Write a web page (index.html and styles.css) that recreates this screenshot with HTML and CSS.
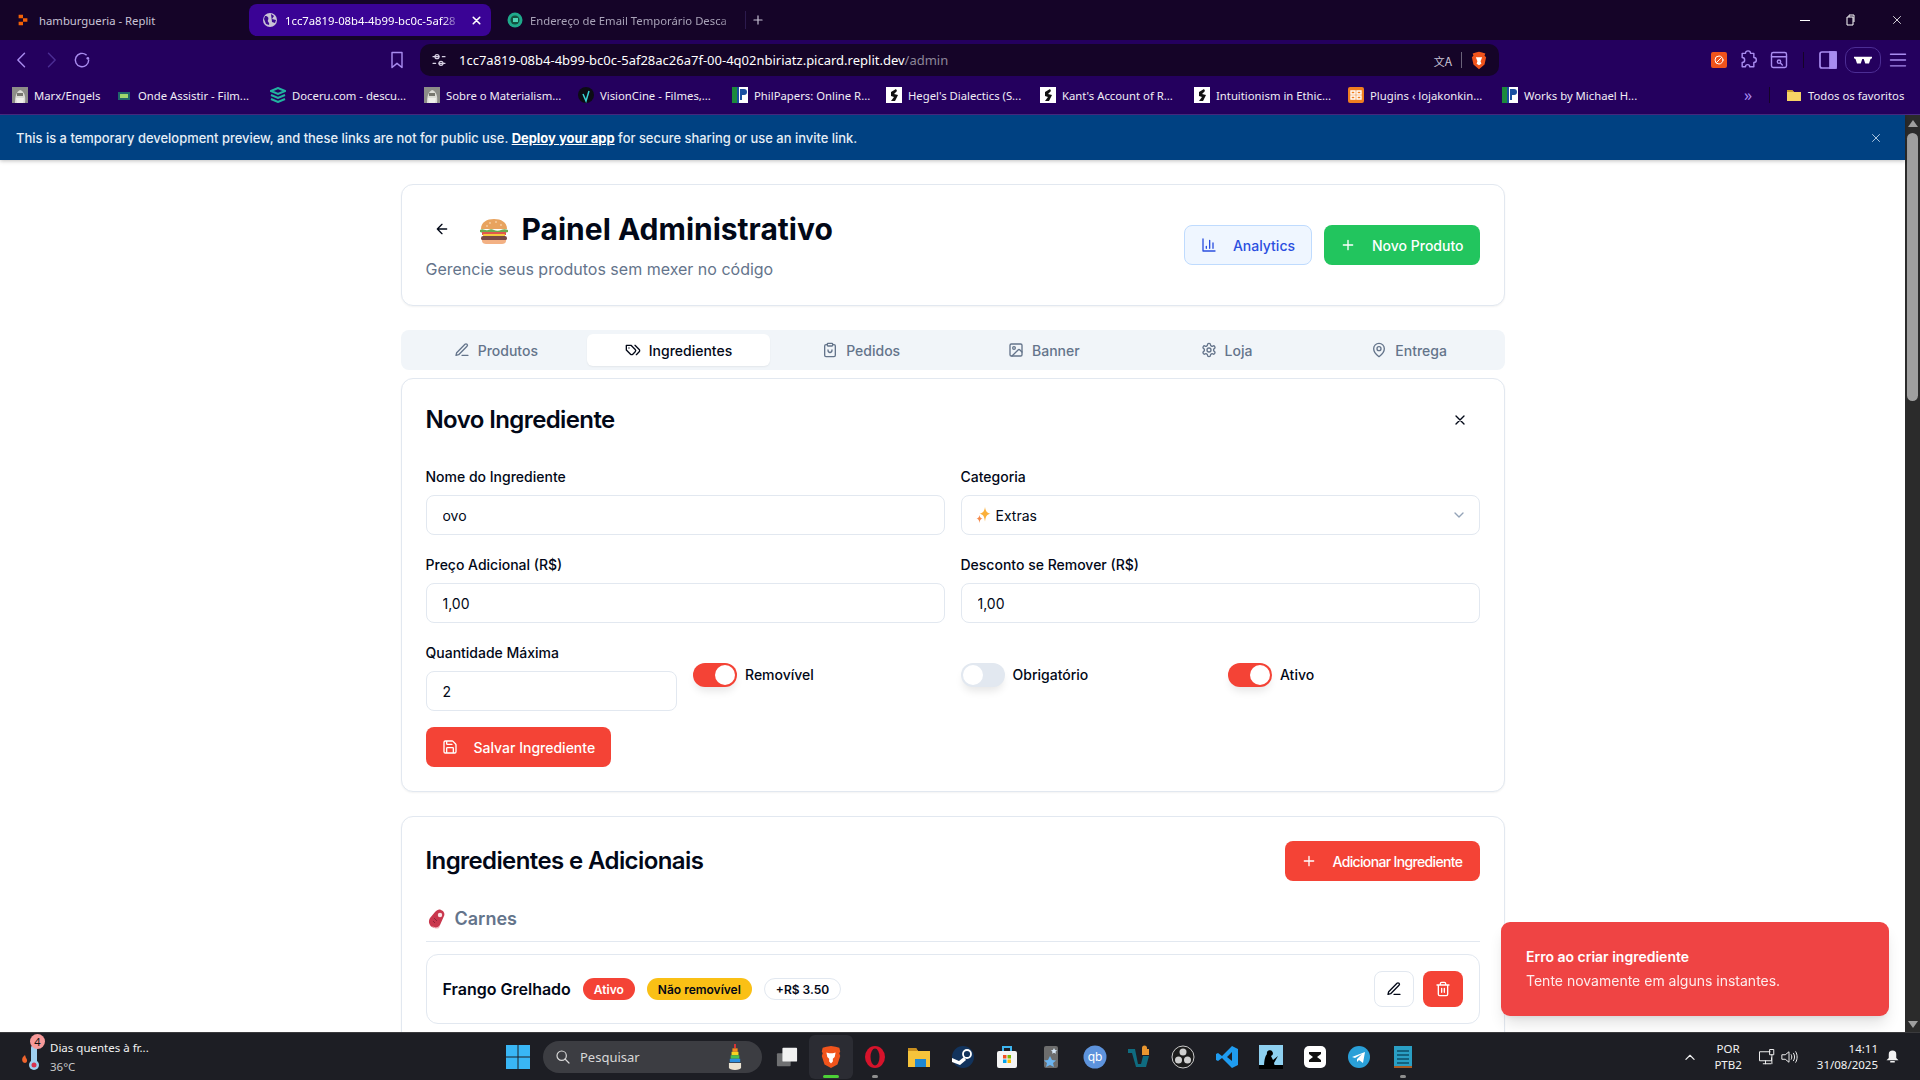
FILE: index.html
```html
<!DOCTYPE html>
<html lang="pt-BR">
<head>
<meta charset="utf-8">
<title>Painel Administrativo</title>
<link rel="stylesheet" href="styles.css">
</head>
<body>
<svg class="sprite" aria-hidden="true">
  <symbol id="i-left" viewBox="0 0 24 24"><path d="M12 19l-7-7 7-7M19 12H5"/></symbol>
  <symbol id="i-chart" viewBox="0 0 24 24"><path d="M3 3v18h18M18 17V9M13 17V5M8 17v-3"/></symbol>
  <symbol id="i-plus" viewBox="0 0 24 24"><path d="M5 12h14M12 5v14"/></symbol>
  <symbol id="i-pen" viewBox="0 0 24 24"><path d="M12 20h9M16.5 3.5a2.12 2.12 0 0 1 3 3L7 19l-4 1 1-4Z"/></symbol>
  <symbol id="i-tags" viewBox="0 0 24 24"><path d="M9 5H2v7l6.29 6.29c.94.94 2.48.94 3.42 0l3.58-3.58c.94-.94.94-2.48 0-3.42L9 5ZM6 9.01V9M15 5l6.3 6.3a2.4 2.4 0 0 1 0 3.4L17 19"/></symbol>
  <symbol id="i-order" viewBox="0 0 24 24"><path d="M8 4H6a2 2 0 0 0-2 2v14a2 2 0 0 0 2 2h12a2 2 0 0 0 2-2V6a2 2 0 0 0-2-2h-2M9 2h6a1 1 0 0 1 1 1v2a1 1 0 0 1-1 1H9a1 1 0 0 1-1-1V3a1 1 0 0 1 1-1ZM9 12c0 5 6 5 6 0"/></symbol>
  <symbol id="i-image" viewBox="0 0 24 24"><rect x="3" y="3" width="18" height="18" rx="2"/><circle cx="9" cy="9" r="2"/><path d="m21 15-3.086-3.086a2 2 0 0 0-2.828 0L6 21"/></symbol>
  <symbol id="i-gear" viewBox="0 0 24 24"><path d="M12.22 2h-.44a2 2 0 0 0-2 2v.18a2 2 0 0 1-1 1.73l-.43.25a2 2 0 0 1-2 0l-.15-.08a2 2 0 0 0-2.73.73l-.22.38a2 2 0 0 0 .73 2.73l.15.1a2 2 0 0 1 1 1.72v.51a2 2 0 0 1-1 1.74l-.15.09a2 2 0 0 0-.73 2.73l.22.38a2 2 0 0 0 2.73.73l.15-.08a2 2 0 0 1 2 0l.43.25a2 2 0 0 1 1 1.73V20a2 2 0 0 0 2 2h.44a2 2 0 0 0 2-2v-.18a2 2 0 0 1 1-1.73l.43-.25a2 2 0 0 1 2 0l.15.08a2 2 0 0 0 2.73-.73l.22-.39a2 2 0 0 0-.73-2.73l-.15-.08a2 2 0 0 1-1-1.74v-.5a2 2 0 0 1 1-1.74l.15-.09a2 2 0 0 0 .73-2.73l-.22-.38a2 2 0 0 0-2.73-.73l-.15.08a2 2 0 0 1-2 0l-.43-.25a2 2 0 0 1-1-1.73V4a2 2 0 0 0-2-2z"/><circle cx="12" cy="12" r="3"/></symbol>
  <symbol id="i-pin" viewBox="0 0 24 24"><path d="M20 10c0 6-8 12-8 12s-8-6-8-12a8 8 0 0 1 16 0Z"/><circle cx="12" cy="10" r="3"/></symbol>
  <symbol id="i-x" viewBox="0 0 24 24"><path d="M18 6 6 18M6 6l12 12"/></symbol>
  <symbol id="i-chev" viewBox="0 0 24 24"><path d="m6 9 6 6 6-6"/></symbol>
  <symbol id="i-save" viewBox="0 0 24 24"><path d="M15.2 3a2 2 0 0 1 1.4.6l3.8 3.8a2 2 0 0 1 .6 1.4V19a2 2 0 0 1-2 2H5a2 2 0 0 1-2-2V5a2 2 0 0 1 2-2zM17 21v-7a1 1 0 0 0-1-1H8a1 1 0 0 0-1 1v7M7 3v4a1 1 0 0 0 1 1h7"/></symbol>
  <symbol id="i-trash" viewBox="0 0 24 24"><path d="M3 6h18M19 6v14c0 1-1 2-2 2H7c-1 0-2-1-2-2V6M8 6V4c0-1 1-2 2-2h4c1 0 2 1 2 2v2M10 11v6M14 11v6"/></symbol>
  <symbol id="f-marx" viewBox="0 0 16 16"><rect width="16" height="16" fill="#8d8d88"/><path d="M3 16c0-6 1-11 5-13 4 1 6 6 5 13z" fill="#dcdcd6"/><path d="M5 6h6v3H5z" fill="#77776f"/><path d="M4 11h8l-1 5H5z" fill="#efefea"/></symbol>
  <symbol id="f-phil" viewBox="0 0 16 16"><rect width="16" height="16" fill="#fff"/><rect width="5" height="16" fill="#1c8a3c"/><rect x="5" width="2" height="16" fill="#1a4fa0"/><path d="M8 2h4a3 3 0 0 1 0 6h-2v5H8z" fill="#1a4fa0"/></symbol>
  <symbol id="f-hegel" viewBox="0 0 16 16"><rect width="16" height="16" fill="#fff"/><path d="M10 2 5 5v4l3 1-3 4h4l3-6-4-1 3-3z" fill="#111"/></symbol>
</svg>

<header class="tabstrip">
  <div class="tab tab-replit">
    <svg class="fav" viewBox="0 0 16 16"><path d="M3 2h5v4H3zM8 6h5v4H8zM3 10h5v4H3z" fill="#f26207"/></svg>
    <span class="tab-title">hamburgueria - Replit</span>
  </div>
  <div class="tab tab-active">
    <svg class="fav" viewBox="0 0 16 16"><circle cx="8" cy="8" r="7" fill="#c9c3d6"/><path d="M3 4c3 0 4 2 3 4s2 2 1 5l-3-1-2-5zM9 2l3 2-2 3 4 1-1 3-3-1z" fill="#3b0a8f"/></svg>
    <span class="tab-title tab-fade">1cc7a819-08b4-4b99-bc0c-5af28</span>
    <svg class="ic tab-x"><use href="#i-x"/></svg>
  </div>
  <div class="tab tab-mail">
    <svg class="fav" viewBox="0 0 16 16"><circle cx="8" cy="8" r="7.5" fill="#1fa98b"/><circle cx="8" cy="8" r="4.5" fill="#14503f"/><path d="M6 6h5v4H6z" fill="#4fd6b6"/></svg>
    <span class="tab-title tab-fade">Endereço de Email Temporário Desca</span>
  </div>
  <span class="tab-sep"></span>
  <svg class="ic tab-plus"><use href="#i-plus"/></svg>
  <div class="win-btns">
    <span class="win-min"></span>
    <svg class="win-max" viewBox="0 0 12 12"><path d="M3 3h6v8H3zM5 3V1h5v7"/></svg>
    <svg class="ic win-close"><use href="#i-x"/></svg>
  </div>
</header>

<div class="toolbar">
  <svg class="ic tb-ic tb-back" viewBox="0 0 24 24"><path d="M15 4l-8 8 8 8"/></svg>
  <svg class="ic tb-ic tb-fwd" viewBox="0 0 24 24"><path d="M9 4l8 8-8 8"/></svg>
  <svg class="ic tb-ic tb-reload" viewBox="0 0 24 24"><path d="M20 12a8 8 0 1 1-3-6.2"/><circle cx="19" cy="10" r="1.6" class="solid"/></svg>
  <svg class="ic tb-ic tb-mark" viewBox="0 0 24 24"><path d="M6 3h12v18l-6-5-6 5z"/></svg>
  <div class="urlbar">
    <svg class="ic url-tune" viewBox="0 0 24 24"><path d="M3 7h9M17 7h4M3 17h4M12 17h9"/><circle cx="9" cy="7" r="3"/><circle cx="15" cy="17" r="3"/></svg>
    <span class="url-text">1cc7a819-08b4-4b99-bc0c-5af28ac26a7f-00-4q02nbiriatz.picard.replit.dev<span class="url-dim">/admin</span></span>
    <span class="url-trans">文<b>A</b></span>
    <span class="url-sep"></span>
    <svg class="brave-sm" viewBox="0 0 20 24"><path d="M10 1l4 1 4 1-1 3 2 2-2 9-7 6-7-6-2-9 2-2-1-3 4-1z" fill="#f1541c"/><path d="M6 8h8l-2 5 1 3-3 2-3-2 1-3z" fill="#fff"/></svg>
  </div>
  <div class="tb-right">
    <span class="shield-box"><svg class="ic" viewBox="0 0 24 24"><circle cx="12" cy="12" r="8"/><path d="M7 17 17 7"/></svg></span>
    <svg class="ic tb-ic" viewBox="0 0 24 24"><path d="M9 4a3 3 0 0 1 6 0h4v5a3 3 0 0 1 0 6v5h-5a2.5 2.5 0 0 0-5 0H5v-5a3 3 0 0 0 0-6V4z"/></svg>
    <svg class="ic tb-ic" viewBox="0 0 24 24"><rect x="3" y="3" width="18" height="18" rx="2"/><path d="M3 8h18"/><circle cx="12" cy="14" r="2"/><path d="m14 16 2 2"/></svg>
    <span class="tb-sep"></span>
    <svg class="tb-side" viewBox="0 0 20 20"><rect x="2" y="2" width="16" height="16" rx="2"/><rect x="12" y="2" width="6" height="16" class="side-fill"/></svg>
    <span class="guest"><svg viewBox="0 0 24 12" class="shades"><path d="M0 1h24v2l-2 1-2 6h-5l-2-6h-2l-2 6H4L2 4 0 3z"/></svg></span>
    <svg class="ic tb-ic" viewBox="0 0 24 24"><path d="M3 5h18M3 12h18M3 19h18"/></svg>
  </div>
</div>

<nav class="bookmarks">
  <div class="bm bm-first"><svg class="fav"><use href="#f-marx"/></svg><span>Marx/Engels</span></div>
  <div class="bm"><svg class="fav" viewBox="0 0 16 16"><rect x="2" y="5" width="12" height="8" fill="#20656b"/><path d="M4 7h8v4H4z" fill="#9fd86d"/></svg><span>Onde Assistir - Film...</span></div>
  <div class="bm"><svg class="fav" viewBox="0 0 16 16"><path d="M1 4l7-3 7 3-7 3zM1 8l7 3 7-3M1 12l7 3 7-3" fill="none" stroke="#22b3a0" stroke-width="2"/></svg><span>Doceru.com - descu...</span></div>
  <div class="bm"><svg class="fav"><use href="#f-marx"/></svg><span>Sobre o Materialism...</span></div>
  <div class="bm"><svg class="fav" viewBox="0 0 16 16"><circle cx="8" cy="8" r="8" fill="#0c0c14"/><path d="M5 7l3 7 3-10" fill="none" stroke="#3ad6d6" stroke-width="1.5"/></svg><span>VisionCine - Filmes,...</span></div>
  <div class="bm"><svg class="fav"><use href="#f-phil"/></svg><span>PhilPapers: Online R...</span></div>
  <div class="bm"><svg class="fav"><use href="#f-hegel"/></svg><span>Hegel's Dialectics (S...</span></div>
  <div class="bm"><svg class="fav"><use href="#f-hegel"/></svg><span>Kant's Account of R...</span></div>
  <div class="bm"><svg class="fav"><use href="#f-hegel"/></svg><span>Intuitionism in Ethic...</span></div>
  <div class="bm"><svg class="fav" viewBox="0 0 16 16"><rect width="16" height="16" rx="2" fill="#f07f20"/><path d="M3 4h4v3H3zM9 4h4v3H9zM3 9h4v3H3zM9 9h4v3H9z" fill="none" stroke="#fff" stroke-width="1.4"/></svg><span>Plugins ‹ lojakonkin...</span></div>
  <div class="bm bm-last"><svg class="fav"><use href="#f-phil"/></svg><span>Works by Michael H...</span></div>
  <span class="bm-more">»</span>
  <span class="bm-sep"></span>
  <div class="bm bm-all"><svg class="fav" viewBox="0 0 16 16"><path d="M1 3h5l2 2h7v9H1z" fill="#f6d365"/><path d="M1 3h5l2 2H1z" fill="#c99a2e"/></svg><span>Todos os favoritos</span></div>
</nav>

<div class="view">
  <div class="content">
    <div class="banner">
      <p class="banner-text">This is a temporary development preview, and these links are not for public use. <a class="banner-link">Deploy your app</a> for secure sharing or use an invite link.</p>
      <svg class="ic banner-x"><use href="#i-x"/></svg>
    </div>
    <main class="page">
      <div class="wrap">
        <section class="card head-card">
          <div class="head-left">
            <div class="head-title">
              <span class="back"><svg class="ic ic16"><use href="#i-left"/></svg></span>
              <svg class="burger" viewBox="0 0 32 32">
                <path d="M3 14C3 7 9 4 16 4s13 3 13 10z" fill="#e8a35f"/>
                <circle cx="12" cy="8" r=".8" fill="#ffe9c8"/><circle cx="18" cy="7" r=".8" fill="#ffe9c8"/><circle cx="23" cy="10" r=".8" fill="#ffe9c8"/><circle cx="9" cy="11" r=".8" fill="#ffe9c8"/>
                <path d="M2 15c3-2 5 1 8 0s4-1 6 0 5 1 7 0 5-1 7 0v2c-3 1-5 1-7 1H9c-3 0-5 0-7-1z" fill="#6cab4e"/>
                <rect x="4" y="17" width="24" height="3" fill="#e0574c"/>
                <rect x="5" y="19" width="22" height="2.5" rx="1" fill="#f5c93d"/>
                <rect x="3" y="21" width="26" height="4.5" rx="2.2" fill="#7a4a45"/>
                <path d="M4 25h24v1c0 2-2 3-4 3H8c-2 0-4-1-4-3z" fill="#f3b184"/>
              </svg>
              <h1 class="h1">Painel Administrativo</h1>
            </div>
            <p class="sub">Gerencie seus produtos sem mexer no código</p>
          </div>
          <div class="head-actions">
            <button class="btn btn-analytics"><svg class="ic ic16"><use href="#i-chart"/></svg>Analytics</button>
            <button class="btn btn-green"><svg class="ic ic16"><use href="#i-plus"/></svg>Novo Produto</button>
          </div>
        </section>

        <div class="tabs">
          <div class="t"><svg class="ic ic16"><use href="#i-pen"/></svg>Produtos</div>
          <div class="t t-on"><svg class="ic ic16"><use href="#i-tags"/></svg>Ingredientes</div>
          <div class="t"><svg class="ic ic16"><use href="#i-order"/></svg>Pedidos</div>
          <div class="t"><svg class="ic ic16"><use href="#i-image"/></svg>Banner</div>
          <div class="t"><svg class="ic ic16"><use href="#i-gear"/></svg>Loja</div>
          <div class="t"><svg class="ic ic16"><use href="#i-pin"/></svg>Entrega</div>
        </div>

        <section class="card form-card">
          <div class="form-head">
            <h2 class="h2">Novo Ingrediente</h2>
            <span class="form-close"><svg class="ic ic16"><use href="#i-x"/></svg></span>
          </div>
          <div class="grid-2">
            <div class="field"><label class="lbl">Nome do Ingrediente</label><input class="inp" value="ovo"></div>
            <div class="field"><label class="lbl">Categoria</label>
              <div class="select">
                <svg class="sparkle" viewBox="0 0 16 16"><path d="M10 0c.7 4.500 2 6 5.500 6.700C12 7.400 10.700 9 10 14.500 9.300 9 8 7.400 4.500 6.700 8 6 9.300 4.500 10 0z" fill="#fbb03b"/><path d="M4.500 8c.4 2.200 1.200 3.100 3 3.600-1.800.5-2.600 1.400-3 4.400-.4-3-1.200-3.900-3-4.400 1.800-.5 2.600-1.400 3-3.600z" fill="#f58a4b"/></svg>
                <span>Extras</span>
                <svg class="ic ic16 sel-chev"><use href="#i-chev"/></svg>
              </div>
            </div>
            <div class="field"><label class="lbl">Preço Adicional (R$)</label><input class="inp" value="1,00"></div>
            <div class="field"><label class="lbl">Desconto se Remover (R$)</label><input class="inp" value="1,00"></div>
          </div>
          <div class="grid-4">
            <div class="field"><label class="lbl">Quantidade Máxima</label><input class="inp" value="2"></div>
            <div class="sw-row"><span class="sw sw-on"><i class="knob"></i></span><span class="lbl">Removível</span></div>
            <div class="sw-row"><span class="sw"><i class="knob"></i></span><span class="lbl">Obrigatório</span></div>
            <div class="sw-row"><span class="sw sw-on"><i class="knob"></i></span><span class="lbl">Ativo</span></div>
          </div>
          <button class="btn btn-red btn-save"><svg class="ic ic16"><use href="#i-save"/></svg>Salvar Ingrediente</button>
        </section>

        <section class="card list-card">
          <div class="list-head">
            <h2 class="h2">Ingredientes e Adicionais</h2>
            <button class="btn btn-red btn-add"><svg class="ic ic16"><use href="#i-plus"/></svg>Adicionar Ingrediente</button>
          </div>
          <h3 class="cat">
            <svg class="meat" viewBox="0 0 18 20"><path d="M13 1c3 1 4 4 3 6l-4 9c-1 3-5 4-8 2S0 12 2 9l5-6c2-2 4-3 6-2z" fill="#c9374d"/><path d="M4 17c3 2 6 2 8-1l-1 3c-2 1-5 1-7-2z" fill="#f4b6bf"/><circle cx="12" cy="6" r="2.200" fill="#fbe3e6"/><path d="M6 9l3 3M5 12l2 2" stroke="#8e2238" fill="none"/></svg>
            Carnes
          </h3>
          <div class="item">
            <div class="item-left">
              <span class="item-name">Frango Grelhado</span>
              <span class="badge b-red">Ativo</span>
              <span class="badge b-yellow">Não removível</span>
              <span class="badge b-white">+R$ 3.50</span>
            </div>
            <div class="item-actions">
              <span class="act act-edit"><svg class="ic ic16"><use href="#i-pen"/></svg></span>
              <span class="act act-del"><svg class="ic ic16"><use href="#i-trash"/></svg></span>
            </div>
          </div>
        </section>
      </div>
    </main>
    <div class="toast">
      <div class="toast-title">Erro ao criar ingrediente</div>
      <div class="toast-desc">Tente novamente em alguns instantes.</div>
    </div>
  </div>
  <aside class="scrollbar">
    <i class="sb-up"></i>
    <i class="sb-thumb"></i>
    <i class="sb-down"></i>
  </aside>
</div>

<footer class="taskbar">
  <div class="weather">
    <svg class="thermo" viewBox="0 0 24 30"><path d="M3 15c-2 3 0 6 2 6s3-3 1-5l-1-3z" fill="#f0642c"/><rect x="11" y="3" width="6" height="20" rx="3" fill="#9fd0f0"/><circle cx="14" cy="23" r="5" fill="#9fd0f0"/><circle cx="14" cy="23" r="2.500" fill="#d8324e"/></svg>
    <span class="w-badge">4</span>
    <div class="w-text"><span>Dias quentes à fr...</span><span class="w-temp">36°C</span></div>
  </div>
  <div class="task-center">
    <svg class="win" viewBox="0 0 24 24"><path d="M0 0h11.500v11.500H0zM12.500 0H24v11.500H12.500zM0 12.500h11.500V24H0zM12.500 12.500H24V24H12.500z" fill="#39b6f5"/></svg>
    <div class="search">
      <svg class="ic s-ic" viewBox="0 0 24 24"><circle cx="10" cy="10" r="7"/><path d="m15 15 6 6"/></svg>
      <span>Pesquisar</span>
      <svg class="rings" viewBox="0 0 20 30"><path d="M9 0h2v5H9z" fill="#e33"/><path d="M7 5h6v4H7z" fill="#f58a1f"/><path d="M6 9h8v4H6z" fill="#f5d31f"/><path d="M5 13h10v4H5z" fill="#4bbf4b"/><path d="M4 17h12v4H4z" fill="#2b8fe0"/><path d="M3 22h14v5a7 3 0 0 1-14 0z" fill="#e9e3d2"/></svg>
    </div>
    <svg class="tv" viewBox="0 0 24 24"><rect x="1" y="8" width="15" height="14" rx="1" fill="#6f7072"/><rect x="7" y="2" width="16" height="15" rx="1" fill="#f2f2f2"/></svg>
    <div class="apps">
      <span class="app app-on">
        <svg viewBox="0 0 24 26"><path d="M12 1l5 1 4 1 1 4-1 2 1 3-3 9-7 4-7-4-3-9 1-3-1-2 1-4 4-1z" fill="#f1541c"/><path d="M7 8l3 1h4l3-1-1 5-2 2v3l-2 2-2-2v-3l-2-2z" fill="#fff"/></svg>
      </span>
      <span class="app app-run"><svg viewBox="0 0 24 24"><ellipse cx="12" cy="12" rx="10" ry="11" fill="#d6132b"/><ellipse cx="12" cy="12" rx="4.500" ry="8.500" fill="#1e1f25"/></svg></span>
      <span class="app"><svg viewBox="0 0 24 24"><path d="M1 3h8l2 3h12v16H1z" fill="#f5c33b"/><rect x="8" y="14" width="11" height="8" fill="#1c87d4"/><path d="M1 3h8l2 3H1z" fill="#c98f1e"/></svg></span>
      <span class="app"><svg viewBox="0 0 24 24"><circle cx="12" cy="12" r="11" fill="#12335c"/><circle cx="16" cy="9" r="4" fill="none" stroke="#fff" stroke-width="1.800"/><path d="M1 13l7 3 5-4 2 3-6 5-8-3z" fill="#fff"/></svg></span>
      <span class="app"><svg viewBox="0 0 24 24"><path d="M8 6V2h8v4" fill="none" stroke="#3db5f0" stroke-width="2"/><rect x="2" y="6" width="20" height="17" rx="2" fill="#f4f4f4"/><path d="M8 10h3.500v3.500H8z" fill="#f25022"/><path d="M12.500 10H16v3.500h-3.500z" fill="#7fba00"/><path d="M8 14.500h3.500V18H8z" fill="#00a4ef"/><path d="M12.500 14.500H16V18h-3.500z" fill="#ffb900"/></svg></span>
      <span class="app"><svg viewBox="0 0 24 24"><rect x="5" y="1" width="14" height="22" rx="2" fill="#6d6d6d"/><path d="M11 11l2 4 4 .5-3 2.500 1 4-4-2-4 2 1-4-3-2.500 4-.5z" fill="#6cb4f0"/><path d="M15 3l1 2 2 .3-1.500 1.500.4 2-1.900-1-1.900 1 .4-2L12 5.300l2-.3z" fill="#d8e8f8"/></svg></span>
      <span class="app"><svg viewBox="0 0 24 24"><circle cx="12" cy="12" r="11.500" fill="#5d93dc"/><text x="12" y="16" class="qb">qb</text></svg></span>
      <span class="app"><svg viewBox="0 0 24 24"><path d="M1 4h7l3 15h3l2-8h6l-3 11H9L5 8H1z" fill="#0f6c80"/><path d="M15 7V3a2.500 2.500 0 0 1 5 0v1h2v6h-7z" fill="#e8962f"/></svg></span>
      <span class="app"><svg viewBox="0 0 24 24"><circle cx="12" cy="12" r="11" fill="#1b1b1b" stroke="#c9c9c9"/><circle cx="12" cy="7" r="3.500" fill="#cfcfcf"/><circle cx="7.500" cy="15" r="3.500" fill="#cfcfcf"/><circle cx="16.500" cy="15" r="3.500" fill="#cfcfcf"/></svg></span>
      <span class="app"><svg viewBox="0 0 24 24"><path d="M17 1l6 3v16l-6 3L7 13l-4 3-2-1V9l2-1 4 3zm0 6-5 5 5 4z" fill="#1f9cf0"/></svg></span>
      <span class="app"><svg viewBox="0 0 24 24"><rect width="24" height="24" fill="#8ed0f0"/><rect y="20" width="24" height="4" fill="#000"/><path d="M5 22c0-6 1-11 3-13a3 3 0 1 1 4 2l2 4 5-4-4 7 1 4z" fill="#000"/></svg></span>
      <span class="app"><svg viewBox="0 0 24 24"><rect x="1" y="1" width="22" height="22" rx="5" fill="#fff"/><path d="M6 7h12v2l-4 3 4 3v2H6v-2l4-3-4-3z" fill="#111"/></svg></span>
      <span class="app"><svg viewBox="0 0 24 24"><circle cx="12" cy="12" r="11" fill="#2aa0d8"/><path d="M5 12l13-5-2 11-4-3-2 2v-3l5-5-7 4z" fill="#fff"/></svg></span>
      <span class="app app-run"><svg viewBox="0 0 20 24"><rect x="1" y="1" width="18" height="21" fill="#2a9fc4"/><rect y="21" x="1" width="18" height="2" fill="#a85b23"/><path d="M4 6h12M4 10h12M4 14h12M4 18h12" stroke="#0c4f68" stroke-width="1.500"/></svg></span>
    </div>
  </div>
  <div class="tray">
    <svg class="ic tray-up" viewBox="0 0 24 24"><path d="m5 16 7-7 7 7"/></svg>
    <div class="tray-lang"><span>POR</span><span>PTB2</span></div>
    <svg class="ic tray-ic" viewBox="0 0 24 24"><path d="M16 5H2v12h16v-4M7 21h10M10 17v4"/><rect x="16" y="2" width="5" height="7"/><path d="M18.500 9v12"/></svg>
    <svg class="ic tray-ic" viewBox="0 0 24 24"><path d="M3 9h4l5-4v14l-5-4H3zM15 9c1 2 1 4 0 6M18 7c2 3 2 7 0 10M21 5c2.500 4 2.500 10 0 14"/></svg>
    <div class="tray-clock"><span>14:11</span><span>31/08/2025</span></div>
    <svg class="bell" viewBox="0 0 20 20"><path d="M10 2a5 5 0 0 1 5 5v5l3 3H2l3-3V7a5 5 0 0 1 5-5z" fill="#f2f2f2"/><rect x="7" y="16" width="6" height="2" fill="#f2f2f2"/></svg>
  </div>
</footer>
</body>
</html>
```

FILE: styles.css
```css
* { box-sizing: border-box; }
html, body { margin: 0; height: 100%; }
body {
  display: flex;
  flex-direction: column;
  height: 100vh;
  overflow: hidden;
  font-family: "Noto Sans", sans-serif;
  background: #fff;
}
.sprite { width: 0; height: 0; position: absolute; }
.ic { fill: none; stroke: currentColor; stroke-width: 2; stroke-linecap: round; stroke-linejoin: round; width: 16px; height: 16px; flex: none; }
.ic16 { width: 16px; height: 16px; }
.fav { width: 16px; height: 16px; flex: none; }

/* browser chrome */
.tabstrip { height: 40px; flex: none; display: flex; align-items: center; background: #150428; color: #c9c3d6; font-size: 11.3px; padding-left: 8px; }
.tab { height: 32px; display: flex; align-items: center; gap: 7px; border-radius: 8px; }
.tab-replit { width: 241px; padding-left: 8px; gap: 9px; }
.tab-replit .fav { width: 14px; height: 14px; }
.tab-active { width: 242px; padding: 0 8px 0 13px; background: #3a0395; color: #fff; }
.tab-mail { width: 240px; margin-left: 8px; padding-left: 8px; color: #a9a3b8; }
.tab-title { white-space: nowrap; overflow: hidden; flex: 1; min-width: 0; }
.tab-fade { mask-image: linear-gradient(to right, #000 90%, rgba(0,0,0,.15)); }
.tab-x { width: 13px; height: 13px; color: #fff; margin-left: 4px; stroke-width: 3; }
.tab-sep { width: 1px; height: 18px; background: #2c1a4d; margin: 0 3px 0 6px; }
.tab-plus { width: 14px; height: 14px; margin-left: 2px; color: #c9c3d6; }
.win-btns { margin-left: auto; display: flex; align-items: center; gap: 34px; padding-right: 16px; color: #fff; }
.win-min { width: 10px; height: 1px; background: #fff; }
.win-max { width: 12px; height: 12px; fill: none; stroke: #fff; }
.win-close { width: 14px; height: 14px; stroke-width: 1.400; }

.toolbar { height: 40px; flex: none; display: flex; align-items: center; background: #24005e; color: #a98cf0; padding-left: 12px; }
.tb-ic { width: 20px; height: 20px; stroke-width: 1.700; }
.tb-fwd { margin-left: 9px; color: #4c2d94; }
.tb-reload { margin-left: 11px; }
.solid { fill: currentColor; stroke: none; }
.tb-mark { margin-left: 295px; width: 20px; height: 22px; }
.urlbar { width: 1079px; margin-left: 13px; height: 32px; background: #150428; border-radius: 10px; display: flex; align-items: center; padding: 0 8px 0 11px; color: #fff; font-size: 13px; }
.url-tune { color: #d8d2e4; width: 16px; height: 16px; stroke-width: 1.800; }
.url-text { margin-left: 12px; flex: 1; white-space: nowrap; }
.url-dim { color: #8d8799; }
.url-trans { font-size: 11px; color: #c9c3d6; margin-right: 6px; font-family: "Noto Sans CJK SC", sans-serif; }
.url-trans b { font-weight: 400; font-size: 12px; }
.url-sep { width: 1px; height: 16px; background: #6a6279; margin: 0 9px 0 3px; }
.brave-sm { width: 16px; height: 19px; margin-right: 4px; }
.tb-right { margin-left: auto; display: flex; align-items: center; gap: 11px; padding-right: 12px; }
.shield-box { width: 16px; height: 16px; background: #f0531c; border-radius: 2px; display: flex; align-items: center; justify-content: center; color: #fff; }
.shield-box .ic { width: 12px; height: 12px; }
.tb-sep { width: 1px; height: 16px; background: #150428; margin: 0 3px; }
.tb-side { width: 20px; height: 20px; fill: none; stroke: #a98cf0; stroke-width: 1.700; }
.side-fill { fill: #a98cf0; }
.guest { width: 36px; height: 26px; border: 1px solid #4c2d94; border-radius: 10px; display: flex; align-items: center; justify-content: center; margin: 0 -4px; }
.shades { width: 18px; height: 9px; fill: #fff; }

.bookmarks { height: 35px; flex: none; display: flex; align-items: center; background: #24005e; border-bottom: 1px solid #4a2a85; color: #f0edf5; font-size: 11.3px; padding: 0 0 4px 12px; white-space: nowrap; }
.bm { width: 154px; display: flex; align-items: center; gap: 6px; }
.bm-first { width: 104px; }
.bm-last { width: 242px; }
.bm-all { width: auto; gap: 6px; }
.bm-more { color: #a98cf0; font-size: 16px; width: 16px; }
.bm-sep { width: 1px; height: 16px; background: #150428; margin: 0 16px 0 9px; }

/* view */
.view { flex: 1; min-height: 0; display: flex; }
.content { flex: 1; min-width: 0; display: flex; flex-direction: column; position: relative; }
.banner { height: 45px; flex: none; display: flex; align-items: center; justify-content: space-between; padding: 0 22px 0 16px; background: #004182; color: #e6eef6; box-shadow: 0 1px 4px rgba(0,0,0,.25); position: relative; }
.banner-text { margin: 0; font: 500 12.95px "Inter", sans-serif; }
.banner-link { color: #fff; font-weight: 700; text-decoration: underline; }
.banner-x { width: 14px; height: 14px; color: #b8cfe6; stroke-width: 1.600; }
.page { flex: 1; min-height: 0; overflow: hidden; font-family: "Inter", sans-serif; color: #020817; }
.wrap { width: 1104px; margin: 24px auto 0; }

.card { background: #fff; border: 1px solid #e2e8f0; border-radius: 12px; box-shadow: 0 1px 2px rgba(0,0,0,.05); padding: 24px; }
.head-card { display: flex; justify-content: space-between; align-items: center; }
.head-title { display: flex; align-items: center; height: 40px; }
.back { width: 32px; display: flex; justify-content: center; margin-right: 20px; color: #020817; }
.burger { width: 32px; height: 32px; margin: 3px 12px 0 0; }
.h1 { margin: 0; font-size: 30px; line-height: 40px; font-weight: 700; }
.sub { margin: 8px 0 0; font-size: 16px; line-height: 24px; color: #64748b; }
.head-actions { display: flex; gap: 12px; }
.btn { height: 40px; display: flex; align-items: center; gap: 16px; padding: 0 16px; border: 0; border-radius: 8px; font: 500 14px "Inter", sans-serif; color: #fff; white-space: nowrap; }
.btn-analytics { background: #eff6ff; border: 1px solid #bfdbfe; color: #2b4fe0; }
.btn-green { background: #22c55e; }
.btn-red { background: #f44336; }

.tabs { margin-top: 24px; height: 40px; padding: 4px; background: #f1f5f9; border-radius: 8px; display: grid; grid-template-columns: repeat(6, 1fr); }
.t { display: flex; align-items: center; justify-content: center; gap: 8px; font-size: 14px; font-weight: 500; color: #64748b; border-radius: 6px; }
.t-on { background: #fff; color: #020817; box-shadow: 0 1px 2px rgba(0,0,0,.06); }

.form-card { margin-top: 8px; padding-bottom: 24px; }
.form-head { display: flex; justify-content: space-between; align-items: center; height: 34px; margin-bottom: 30px; }
.h2 { margin: 0; font-size: 24px; line-height: 32px; font-weight: 600; letter-spacing: -.6px; }
.form-close { width: 40px; display: flex; justify-content: center; }
.grid-2 { display: grid; grid-template-columns: 1fr 1fr; gap: 20px 16px; }
.grid-4 { display: grid; grid-template-columns: repeat(4, 1fr); gap: 16px; margin-top: 20px; }
.field { display: flex; flex-direction: column; gap: 8px; }
.lbl { font-size: 14px; line-height: 20px; font-weight: 500; color: #020817; }
.inp { height: 40px; width: 100%; padding: 0 16px; border: 1px solid #e2e8f0; border-radius: 8px; background: #fff; font: 400 14px "Inter", sans-serif; color: #020817; }
.select { height: 40px; display: flex; align-items: center; gap: 5px; padding: 0 12px 0 13px; border: 1px solid #e2e8f0; border-radius: 8px; font-size: 14px; }
.sparkle { width: 16px; height: 16px; }
.sel-chev { margin-left: auto; color: #94a3b8; }
.sw-row { display: flex; align-items: center; gap: 8px; align-self: start; margin-top: 20px; }
.sw { width: 44px; height: 24px; border-radius: 12px; background: #e2e8f0; display: flex; align-items: center; padding: 2px; box-shadow: 0 6px 8px -2px rgba(0,0,0,.1); }
.sw-on { background: #f44336; justify-content: flex-end; }
.knob { width: 20px; height: 20px; border-radius: 50%; background: #fff; }
.btn-save { margin-top: 16px; width: 185px; }

.list-card { margin-top: 24px; }
.list-head { display: flex; justify-content: space-between; align-items: center; height: 40px; }
.btn-add { width: 195px; letter-spacing: -.65px; }
.cat { margin: 24px 0 0; padding: 0 0 8px 2px; height: 37px; border-bottom: 1px solid #e2e8f0; display: flex; align-items: center; gap: 9px; font-size: 18px; line-height: 28px; font-weight: 600; color: #64748b; }
.meat { width: 18px; height: 20px; }
.item { margin-top: 12px; height: 70px; border: 1px solid #e2e8f0; border-radius: 12px; padding: 0 16px; display: flex; align-items: center; justify-content: space-between; }
.item-left { display: flex; align-items: center; gap: 12px; }
.item-name { font-size: 16px; font-weight: 600; }
.badge { height: 22px; display: flex; align-items: center; padding: 0 11px; border-radius: 11px; font-size: 12px; font-weight: 600; }
.b-red { background: #f44336; color: #fff; }
.b-yellow { color: #020817; background-color: #fac015; }
.b-white { background: #fff; border: 1px solid #e2e8f0; }
.item-actions { display: flex; gap: 9px; }
.act { width: 40px; height: 36px; border-radius: 8px; display: flex; align-items: center; justify-content: center; }
.act-edit { border: 1px solid #e2e8f0; background: #fff; }
.act-del { background: #f44336; color: #fff; }

.toast { position: absolute; right: 16px; bottom: 16px; width: 388px; height: 94px; padding: 25px 25px; border-radius: 9px; background: #ef4444; color: #fff; font: 14px/20px "Inter", sans-serif; box-shadow: 0 10px 15px -3px rgba(0,0,0,.12), 0 4px 6px -4px rgba(0,0,0,.1); }
.toast-title { font-weight: 600; }
.toast-desc { margin-top: 4px; opacity: .9; }

.scrollbar { width: 15px; flex: none; background: #2b2b2b; display: flex; flex-direction: column; align-items: center; padding: 5px 0 4px; }
.sb-up, .sb-down { width: 0; height: 0; border-left: 5px solid transparent; border-right: 5px solid transparent; }
.sb-up { border-bottom: 7px solid #9f9f9f; }
.sb-down { border-top: 7px solid #9f9f9f; margin-top: auto; }
.sb-thumb { width: 11px; height: 268px; margin-top: 6px; background: #9f9f9f; border-radius: 6px; }

/* taskbar */
.taskbar { height: 48px; flex: none; display: flex; align-items: center; position: relative; background: #1d1e24; border-top: 1px solid #3a3a3d; color: #f2f2f2; font-size: 12px; }
.weather { position: relative; width: 460px; display: flex; align-items: center; padding-left: 20px; }
.thermo { width: 24px; height: 30px; }
.w-badge { position: absolute; left: 30px; top: -4px; width: 15px; height: 15px; border-radius: 50%; background: #f79a9a; color: #111; font-size: 11px; line-height: 15px; text-align: center; }
.w-text { display: flex; flex-direction: column; margin-left: 6px; line-height: 19px; font-size: 11.500px; }
.w-temp { color: #c8c8c8; }
.task-center { position: absolute; left: 506px; top: 0; bottom: 0; display: flex; align-items: center; }
.win { width: 24px; height: 24px; }
.search { width: 219px; height: 32px; margin-left: 13px; border-radius: 16px; background: #3c3d42; display: flex; align-items: center; padding: 0 18px 0 12px; color: #d8d8d8; font-size: 13px; }
.s-ic { width: 16px; height: 16px; margin-right: 9px; stroke-width: 1.800; }
.rings { width: 18px; height: 26px; margin-left: auto; }
.tv { width: 22px; height: 22px; margin-left: 14px; }
.apps { display: flex; margin-left: 11px; }
.app { width: 44px; height: 44px; display: flex; align-items: center; justify-content: center; position: relative; border-radius: 6px; }
.app svg { width: 24px; height: 24px; }
.app-on { background: #2b2c33; }
.app-on::after { content: ""; position: absolute; bottom: 1px; width: 16px; height: 3px; border-radius: 2px; background: #4cd137; }
.app-run::after { content: ""; position: absolute; bottom: 1px; width: 6px; height: 3px; border-radius: 2px; background: #8f8f8f; }
.qb { fill: #fff; font: 12px "Inter", sans-serif; text-anchor: middle; }
.tray { margin-left: auto; display: flex; align-items: center; padding-right: 20px; }
.tray-up { width: 14px; height: 14px; }
.tray-lang { display: flex; flex-direction: column; align-items: center; margin: 0 16px 0 17px; line-height: 16px; font-size: 11.500px; }
.tray-ic { width: 18px; height: 18px; margin-right: 4px; stroke-width: 1.300; }
.tray-clock { display: flex; flex-direction: column; align-items: flex-end; margin-left: 15px; line-height: 16px; font-size: 11.500px; }
.bell { width: 15px; height: 15px; margin-left: 7px; }
```
